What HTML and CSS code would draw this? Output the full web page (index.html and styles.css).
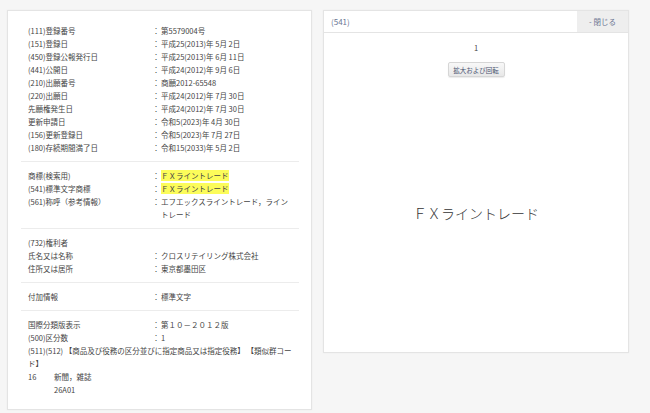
FILE: index.html
```html
<!DOCTYPE html>
<html lang="ja">
  <head>
    <meta charset="UTF-8" />
    <meta name="viewport" content="width=device-width, initial-scale=1.0" />
    <title>商標詳細</title>
    <link rel="stylesheet" href="styles.css">
  </head>
  <body>
    <main class="page">
      <div class="card detail">
        <section class="block">
          <div class="row"><div class="label">(111)登録番号</div><div class="colon">：</div><div class="value">第5579004号</div></div>
          <div class="row"><div class="label">(151)登録日</div><div class="colon">：</div><div class="value">平成25(2013)年 5月 2日</div></div>
          <div class="row"><div class="label">(450)登録公報発行日</div><div class="colon">：</div><div class="value">平成25(2013)年 6月 11日</div></div>
          <div class="row"><div class="label">(441)公開日</div><div class="colon">：</div><div class="value">平成24(2012)年 9月 6日</div></div>
          <div class="row"><div class="label">(210)出願番号</div><div class="colon">：</div><div class="value">商願2012-65548</div></div>
          <div class="row"><div class="label">(220)出願日</div><div class="colon">：</div><div class="value">平成24(2012)年 7月 30日</div></div>
          <div class="row"><div class="label">先願権発生日</div><div class="colon">：</div><div class="value">平成24(2012)年 7月 30日</div></div>
          <div class="row"><div class="label">更新申請日</div><div class="colon">：</div><div class="value">令和5(2023)年 4月 30日</div></div>
          <div class="row"><div class="label">(156)更新登録日</div><div class="colon">：</div><div class="value">令和5(2023)年 7月 27日</div></div>
          <div class="row"><div class="label">(180)存続期間満了日</div><div class="colon">：</div><div class="value">令和15(2033)年 5月 2日</div></div>
        </section>
        <section class="block">
          <div class="row"><div class="label">商標(検索用)</div><div class="colon">：</div><div class="value"><mark>ＦＸライントレード</mark></div></div>
          <div class="row"><div class="label">(541)標準文字商標</div><div class="colon">：</div><div class="value"><mark>ＦＸライントレード</mark></div></div>
          <div class="row"><div class="label">(561)称呼（参考情報）</div><div class="colon">：</div><div class="value">エフエックスライントレード，ライントレード</div></div>
        </section>
        <section class="block">
          <div class="row"><div class="label">(732)権利者</div></div>
          <div class="row"><div class="label">氏名又は名称</div><div class="colon">：</div><div class="value">クロスリテイリング株式会社</div></div>
          <div class="row"><div class="label">住所又は居所</div><div class="colon">：</div><div class="value">東京都墨田区</div></div>
        </section>
        <section class="block">
          <div class="row"><div class="label">付加情報</div><div class="colon">：</div><div class="value">標準文字</div></div>
        </section>
        <section class="block">
          <div class="row"><div class="label">国際分類版表示</div><div class="colon">：</div><div class="value">第１０－２０１２版</div></div>
          <div class="row"><div class="label">(500)区分数</div><div class="colon">：</div><div class="value">1</div></div>
          <div class="line">(511)(512) 【商品及び役務の区分並びに指定商品又は指定役務】 【類似群コード】</div>
          <div class="goods"><div class="cls">16</div><div>新聞，雑誌</div></div>
          <div class="goods"><div class="cls"></div><div>26A01</div></div>
        </section>
      </div>

      <div class="card viewer">
        <div class="viewer-head">
          <div class="viewer-title">(541)</div>
          <button class="close">- 閉じる</button>
        </div>
        <div class="viewer-body">
          <div class="page-no">1</div>
          <button class="zoom">拡大および回転</button>
          <div class="mark-image">ＦＸライントレード</div>
        </div>
      </div>
    </main>
  </body>
</html>
```
FILE: styles.css
```css
* { box-sizing: border-box; }
html, body { margin: 0; background: #f6f6f6; }
body { font-family: "Noto Sans CJK JP", "Noto Sans", sans-serif; font-size: 7.5px; color: #444; }
.page { display: flex; align-items: flex-start; gap: 11px; padding: 10px 7px; }
.card { background: #fff; border: 1px solid #e4e4e4; box-shadow: 0 0 2px rgba(0, 0, 0, 0.04); }

.detail { width: 305px; padding: 6px 12px 6px 13px; }
.block { padding: 7px 7px; border-bottom: 1px solid #ececec; }
.block:last-child { border-bottom: none; }
.row { display: grid; grid-template-columns: 124px 8px 1fr; line-height: 13px; }
.label { white-space: nowrap; }
.colon { text-align: center; }
.value { padding-left: 1px; }
mark { background: #fcfc5a; color: #444; }
.line { line-height: 13px; }
.goods { display: grid; grid-template-columns: 26px 1fr; line-height: 13px; }

.viewer { width: 306px; }
.viewer-head { display: flex; height: 22px; border-bottom: 1px solid #e4e4e4; color: #6a7592; font-size: 8px; }
.viewer-title { flex: 1; display: flex; align-items: center; padding-left: 7px; }
.close { width: 51px; border: none; background: #eeeeee; color: #6a7592; font: inherit; font-size: 7.5px; padding: 0; }
.viewer-body { display: flex; flex-direction: column; align-items: center; padding: 8px 0 11px; }
.page-no { line-height: 13px; font-size: 7.5px; color: #444; }
.zoom { margin-top: 8px; height: 15px; width: 57px; padding: 0; border: 1px solid #d6d6d6; border-radius: 2px; background: linear-gradient(#f8f8f8, #e8e8e8); color: #4a5470; font: inherit; font-size: 6.5px; box-shadow: 0 1px 1px rgba(0, 0, 0, 0.08); }
.mark-image { margin-top: 8px; height: 256px; display: flex; align-items: center; justify-content: center; font-size: 14px; font-weight: 300; color: #333; }
```
